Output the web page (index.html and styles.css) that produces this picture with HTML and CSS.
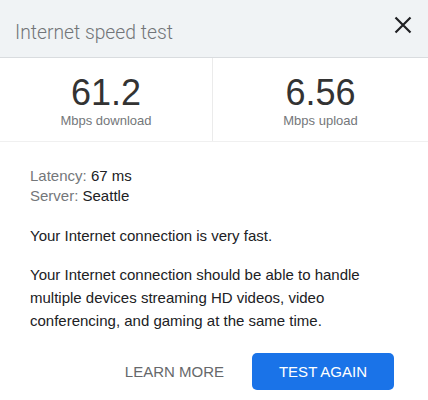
FILE: index.html
```html
<!DOCTYPE html>
<html>
<head>
<meta charset="utf-8">
<link rel="stylesheet" href="styles.css">
</head>
<body>
<div class="dialog">
  <div class="header">
    <div class="title">Internet speed test</div>
    <button class="close" aria-label="Close">
      <svg width="18" height="18" viewBox="0 0 18 18"><path d="M1.5 1.5L16.5 16.5M16.5 1.5L1.5 16.5" stroke="#202124" stroke-width="2.2" fill="none"/></svg>
    </button>
  </div>
  <div class="stats">
    <div class="stat">
      <div class="value">61.2</div>
      <div class="unit">Mbps download</div>
    </div>
    <div class="stat">
      <div class="value">6.56</div>
      <div class="unit">Mbps upload</div>
    </div>
  </div>
  <div class="content">
    <div class="info"><span class="label">Latency:</span> 67 ms</div>
    <div class="info"><span class="label">Server:</span> Seattle</div>
    <p class="summary">Your Internet connection is very fast.</p>
    <p class="detail">Your Internet connection should be able to handle multiple devices streaming HD videos, video conferencing, and gaming at the same time.</p>
  </div>
  <div class="actions">
    <button class="btn-text">LEARN MORE</button>
    <button class="btn-primary">TEST AGAIN</button>
  </div>
</div>
</body>
</html>
```
FILE: styles.css
```css
html, body {
  margin: 0;
  padding: 0;
  background: #ffffff;
}
body {
  font-family: "Liberation Sans", Arial, sans-serif;
  color: #202124;
}
.dialog {
  width: 428px;
  height: 400px;
  overflow: hidden;
}
.header {
  height: 57px;
  background: #f0f3f5;
  border-bottom: 1px solid #d9dcdf;
  display: flex;
  align-items: flex-start;
  padding: 0 16px 0 15px;
}
.title {
  font-family: Roboto, "Liberation Sans", sans-serif;
  font-weight: 300;
  font-size: 19.3px;
  line-height: 24px;
  margin-top: 21px;
  color: #727578;
  flex: 1;
}
.close {
  margin-top: 16px;
  padding: 0;
  border: 0;
  background: none;
  width: 18px;
  height: 18px;
  display: block;
}
.close svg { display: block; }
.stats {
  display: grid;
  grid-template-columns: 213px 1fr;
  border-bottom: 1px solid #f0f0f0;
  height: 83px;
}
.stat {
  text-align: center;
  padding-top: 17px;
}
.stat:first-child {
  border-right: 1px solid #ebebeb;
}
.value {
  font-size: 36px;
  line-height: 36px;
  color: #333333;
}
.unit {
  font-size: 13px;
  line-height: 15px;
  margin-top: 2px;
  color: #74777a;
}
.content {
  padding: 24px 30px 0 30px;
  font-size: 15px;
}
.info {
  line-height: 20px;
}
.label {
  color: #74777a;
}
.summary {
  margin: 18px 0 0 0;
  line-height: 23px;
}
.detail {
  margin: 16px 0 0 0;
  line-height: 23px;
}
.actions {
  display: flex;
  justify-content: flex-end;
  gap: 8px;
  padding: 21px 34px 0 0;
}
.actions button {
  font-family: "Liberation Sans", Arial, sans-serif;
  font-size: 15px;
  height: 37px;
  border: 0;
  border-radius: 5px;
  cursor: pointer;
}
.btn-text {
  background: none;
  color: #66686b;
  padding: 0 20px;
}
.btn-primary {
  background: #1a73e8;
  color: #ffffff;
  padding: 0 26px;
  width: 142px;
}
```
